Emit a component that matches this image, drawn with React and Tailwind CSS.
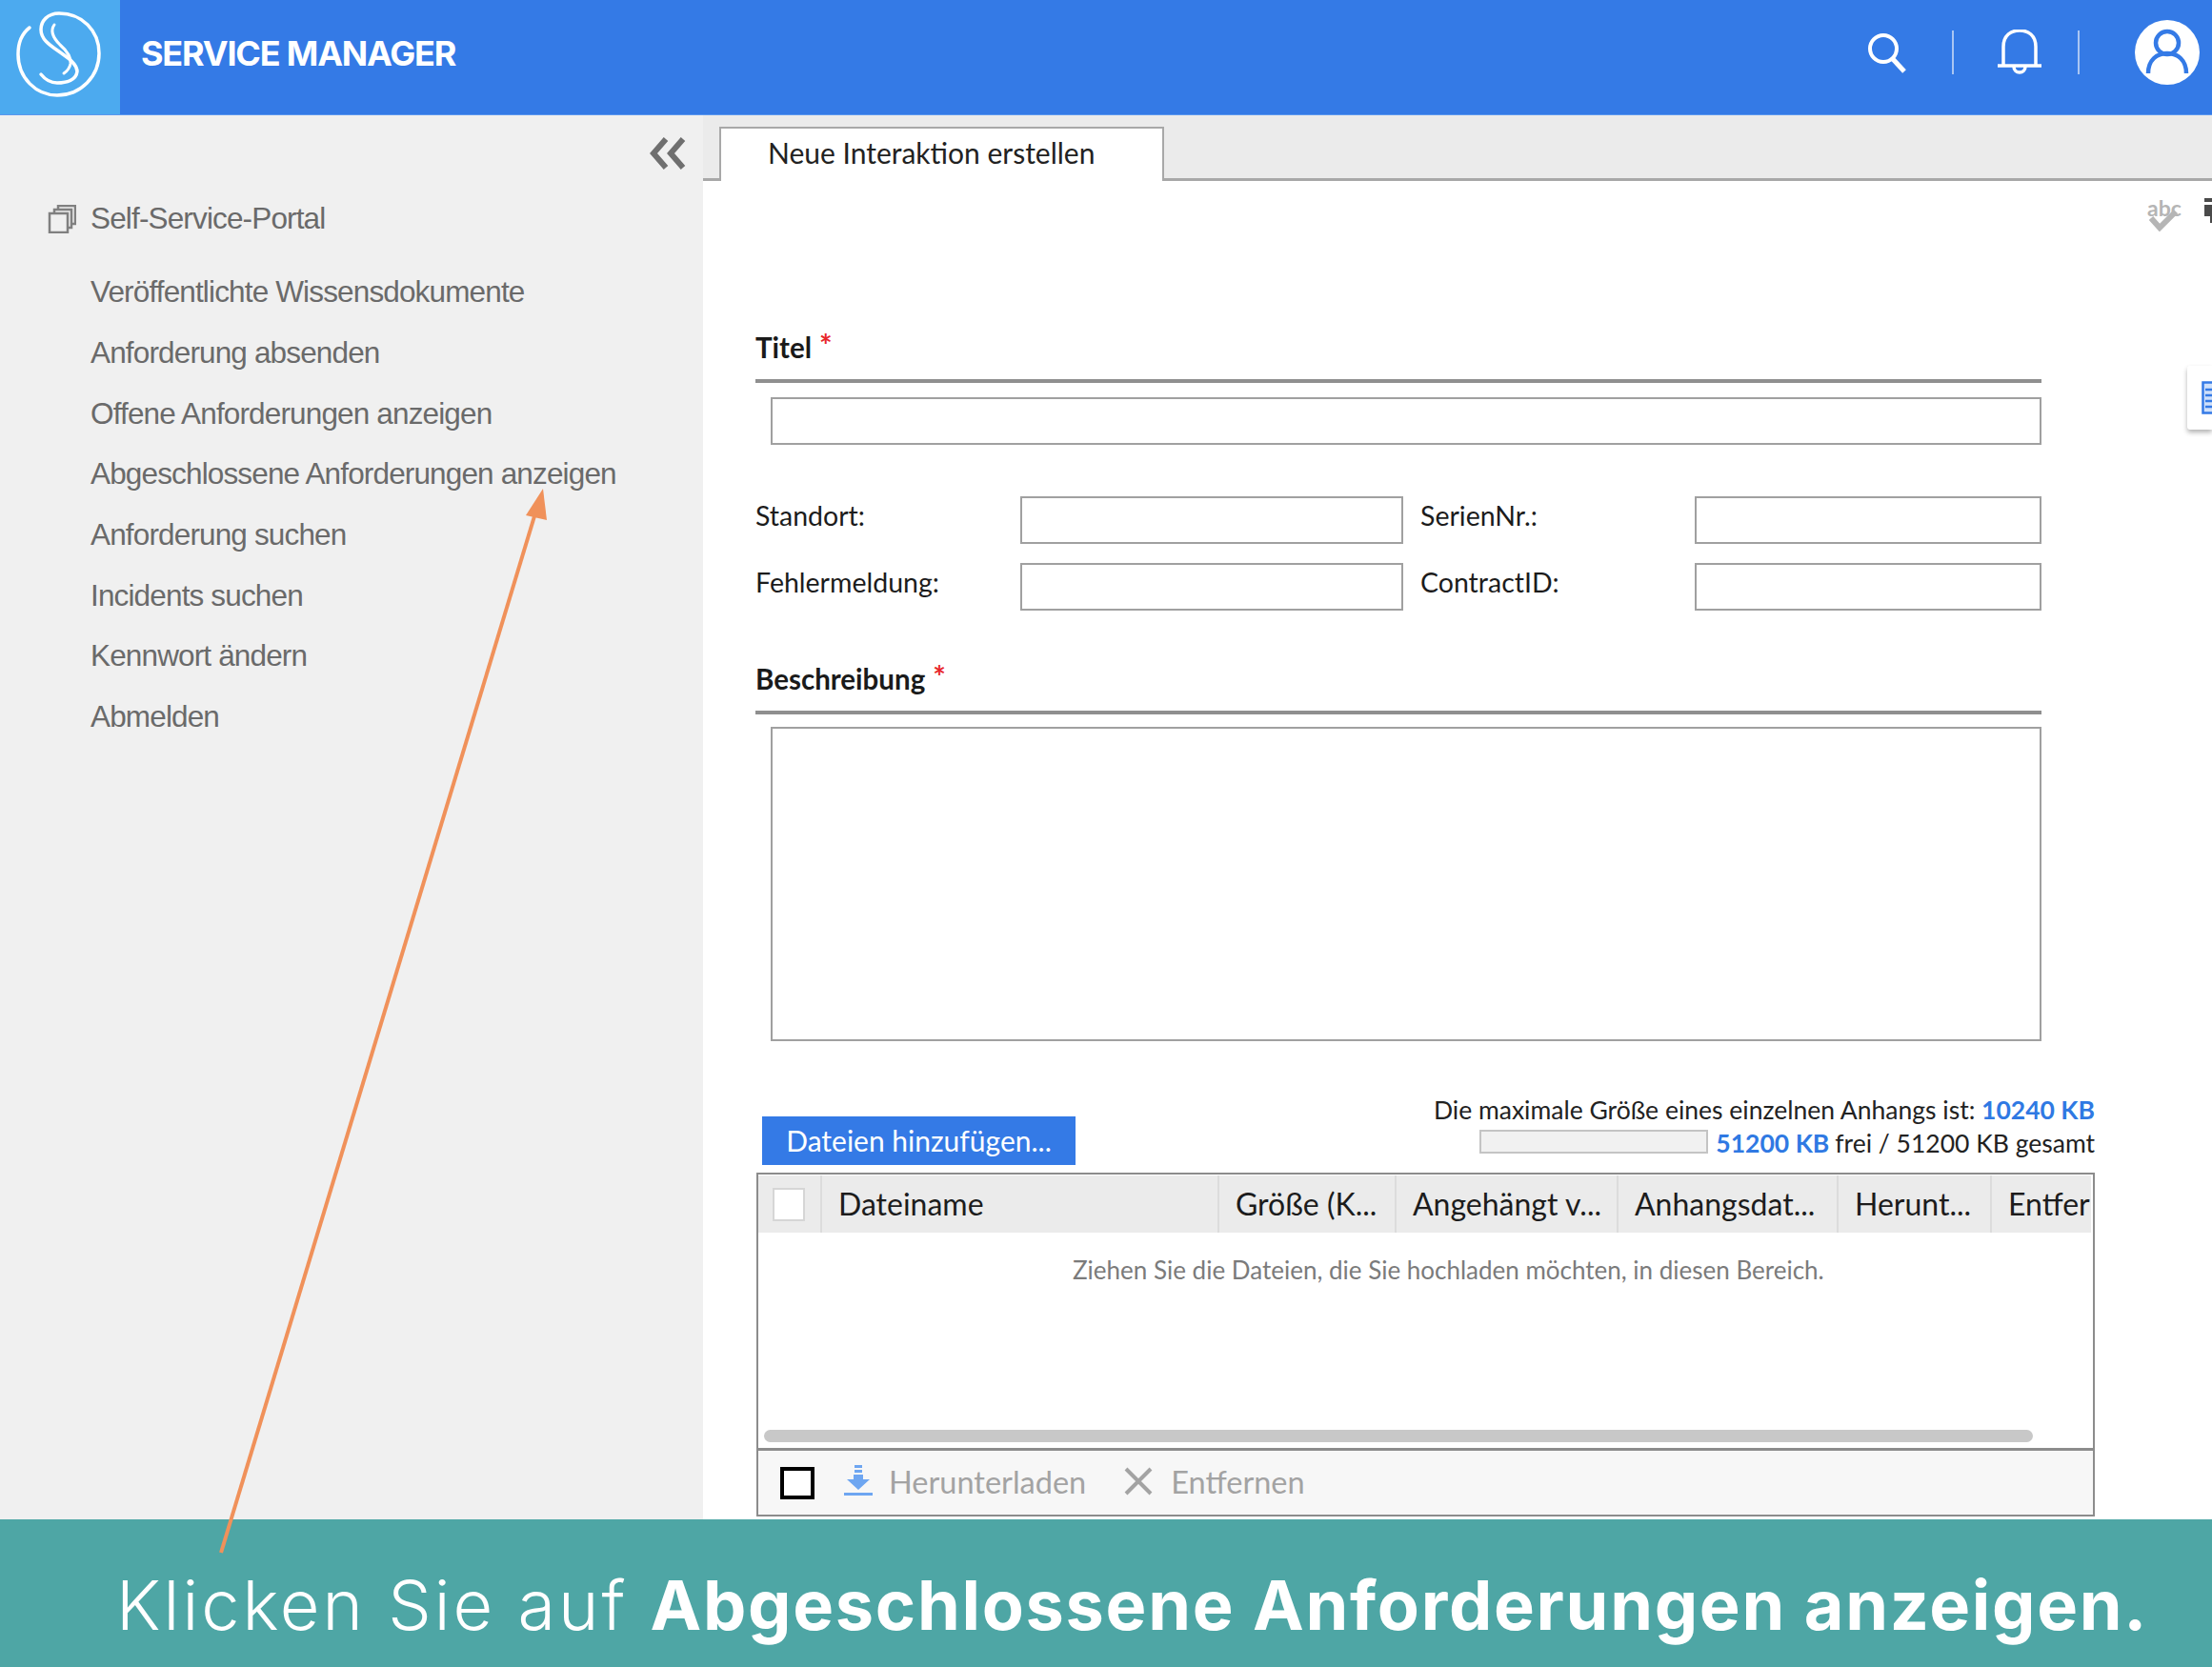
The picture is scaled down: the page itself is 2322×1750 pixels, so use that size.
const sidebarLinks = [
  "Veröffentlichte Wissensdokumente",
  "Anforderung absenden",
  "Offene Anforderungen anzeigen",
  "Abgeschlossene Anforderungen anzeigen",
  "Anforderung suchen",
  "Incidents suchen",
  "Kennwort ändern",
  "Abmelden",
];

const columns = [
  { label: "Dateiname", width: "w-[417px]" },
  { label: "Größe (K...", width: "w-[186px]" },
  { label: "Angehängt v...", width: "w-[233px]" },
  { label: "Anhangsdat...", width: "w-[231px]" },
  { label: "Herunt...", width: "w-[161px]" },
  { label: "Entfernen", width: "flex-1" },
];

function Logo() {
  return (
    <svg width="126" height="121" viewBox="0 0 126 121" fill="none" stroke="#fff" strokeLinecap="round">
      <path d="M31 29 C22 36 19 46 19 57 C19 82 38 100 60 100 C85 100 104 80 104 56 C104 32 86 14 62 14 C50 14 43 22 43 31 C43 43 55 49 66 57 C75 63 81 69 81 75 C80 84 70 87 60 87 C53 87 47 83 43 78" strokeWidth="3.5" />
      <path d="M57 26 C52 33 56 40 63 47 C71 54 75 60 74 67 C73 72 70 75 67 77" strokeWidth="3" />
    </svg>
  );
}

function Header() {
  return (
    <header className="h-[121px] shrink-0 flex items-stretch bg-[#347ae6] border-b border-[#5b97ee]">
      <div className="w-[126px] bg-[#4caaef] flex items-center justify-center">
        <Logo />
      </div>
      <div className="ml-[22px] flex items-center pb-[9px] text-white text-[36px] font-bold tracking-[-1.2px] font-['Inter',sans-serif]">
        SERVICE MANAGER
      </div>
      <div className="ml-auto flex items-center pb-[11px] text-white">
        <svg width="42" height="44" viewBox="0 0 42 44" fill="none" stroke="#fff" strokeWidth="4">
          <circle cx="17" cy="18" r="14" />
          <path d="M27 29 L39 42" strokeWidth="5" />
        </svg>
        <div className="w-[2px] h-[46px] bg-[#a9c6f3] ml-[47px]" />
        <svg className="ml-[45px]" width="48" height="48" viewBox="0 0 48 48" fill="none" stroke="#fff" strokeWidth="3.5">
          <path d="M1 38 H47" strokeWidth="3.5" />
          <path d="M7 38 V18 C7 6 15 1 24 1 C33 1 41 6 41 18 V38" />
          <path d="M18 39 C18 47 30 47 30 39" />
        </svg>
        <div className="w-[2px] h-[46px] bg-[#a9c6f3] ml-[37px]" />
        <div className="ml-[58px] mr-[13px] w-[68px] h-[68px] rounded-full bg-white flex items-center justify-center">
          <svg width="68" height="68" viewBox="0 0 68 68" fill="none" stroke="#347ae6" strokeWidth="4.5">
            <circle cx="34" cy="24" r="12" />
            <path d="M14 56 C14 42 23 35 34 35 C45 35 54 42 54 56" />
          </svg>
        </div>
      </div>
    </header>
  );
}

function Sidebar() {
  return (
    <aside className="w-[738px] shrink-0 bg-[#f0f0f0] flex flex-col font-['Liberation_Sans',sans-serif] text-[#6a6a6a] text-[31.5px] tracking-[-0.85px]">
      <div className="flex justify-end pr-[18px] pt-[23px] h-[79px]">
        <svg width="39" height="34" viewBox="0 0 39 34" fill="none" stroke="#6f6f6f" strokeWidth="6" >
          <path d="M18 2 L5 17 L18 32" />
          <path d="M36 2 L23 17 L36 32" />
        </svg>
      </div>
      <div className="flex items-center h-[60px]">
        <svg className="ml-[50px]" width="30" height="30" viewBox="0 0 30 30" fill="none" stroke="#808080" strokeWidth="2.5">
          <rect x="2" y="9" width="19" height="20" />
          <path d="M7 8 V5 H25 V24 H22" />
          <path d="M11 4 V1 H29 V20 H26" />
        </svg>
        <span className="ml-[15px]">Self-Service-Portal</span>
      </div>
      <nav className="pl-[95px] pt-[15px] flex flex-col">
        {sidebarLinks.map((link) => (
          <div key={link} className="h-[63.7px] flex items-center">
            {link}
          </div>
        ))}
      </nav>
    </aside>
  );
}

function SectionTitle({ children }) {
  return (
    <div className="ml-[55px] w-[1350px]">
      <div className="h-[40px] flex items-center font-bold text-[29.5px] text-[#1a1a1a]">
        {children}
        <span className="text-[#e8262a] text-[32px] font-bold ml-[8px] -mt-[4px]">*</span>
      </div>
      <div className="h-[4px] bg-[#8f8f8f] mt-[13px]" />
    </div>
  );
}

function TextInput({ className }) {
  return <div className={`h-[50px] border-2 border-[#a0a0a0] bg-white ${className}`} />;
}

function AttachmentTable() {
  return (
    <div className="ml-[56px] w-[1405px] h-[361px] mt-[8px] border-2 border-[#8c8c8c] flex flex-col overflow-hidden">
      <div className="h-[60px] mt-[1px] mr-[2px] bg-[#ebebeb] flex shrink-0">
        <div className="w-[67px] shrink-0 border-r-2 border-[#dcdcdc] flex items-center pl-[15px]">
          <div className="w-[34px] h-[35px] bg-white border-2 border-[#d6d6d6]" />
        </div>
        {columns.map((col) => (
          <div
            key={col.label}
            className={`${col.width} shrink-0 border-r-2 last:border-r-0 border-[#dcdcdc] pl-[17px] flex items-center text-[32px] text-[#1c1c1c] whitespace-nowrap overflow-hidden`}
          >
            {col.label}
          </div>
        ))}
      </div>
      <div className="flex-1 relative flex flex-col">
        <div className="pt-[21px] pl-[330px] text-[26px] text-[#7b7b7b] leading-[36px]">
          Ziehen Sie die Dateien, die Sie hochladen möchten, in diesen Bereich.
        </div>
        <div className="mt-auto mb-[6px] ml-[6px] w-[1332px] h-[13px] rounded-full bg-[#c8c8c8]" />
      </div>
      <div className="h-[70px] shrink-0 border-t-[3px] border-[#8c8c8c] bg-[#f7f7f7] flex items-center text-[32.5px] text-[#a3a3a3]">
        <div className="ml-[23px] w-[36px] h-[34px] border-[4px] border-black bg-white" />
        <svg className="ml-[31px] -mt-[6px]" width="30" height="32" viewBox="0 0 30 32" fill="#6ea6f1">
          <rect x="11" y="0" width="8" height="3" />
          <rect x="11" y="5" width="8" height="3" />
          <path d="M10 10 H20 V15 H27 L15 26 L3 15 H10 Z" />
          <rect x="0" y="29" width="30" height="3" />
        </svg>
        <span className="ml-[17px]">Herunterladen</span>
        <svg className="ml-[40px] -mt-[4px]" width="30" height="30" viewBox="0 0 30 30" stroke="#a3a3a3" strokeWidth="4">
          <path d="M2 2 L28 28 M28 2 L2 28" />
        </svg>
        <span className="ml-[19px]">Entfernen</span>
      </div>
    </div>
  );
}

function Main() {
  return (
    <main className="flex-1 min-w-0 bg-white relative overflow-hidden font-['Lato',sans-serif] text-[#1c1c1c]">
      <div className="h-[69px] bg-[#ebebeb] border-b-[3px] border-[#a8a8a8] flex items-end pl-[17px]">
        <div className="w-[467px] h-[57px] -mb-[3px] bg-white border-2 border-b-0 border-[#a8a8a8] flex items-center pl-[49px] pb-[4px] text-[30px] text-[#222]">
          Neue Interaktion erstellen
        </div>
      </div>

      <div className="h-[155px] flex justify-end items-start pt-[16px]">
        <div className="relative w-[33px] h-[40px] mr-[35px] text-[#b5b5b5] text-[23px] leading-[24px] font-bold">
          abc
          <svg className="absolute left-[2px] top-[13px]" width="30" height="24" viewBox="0 0 30 24" fill="none" stroke="#b5b5b5" strokeWidth="6">
            <path d="M2 10 L11 20 L28 3" />
          </svg>
        </div>
        <div className="absolute right-0 top-[263px] w-[26px] h-[67px] bg-white rounded-l-[3px] shadow-[0_3px_5px_rgba(0,0,0,0.3)] flex items-center justify-end overflow-hidden">
          <svg width="11" height="35" viewBox="0 0 11 35" fill="#cfe0fa" stroke="#347ae6" strokeWidth="2.5">
            <rect x="1.5" y="1.5" width="20" height="32" />
            <path d="M4 9 H22 M4 15 H22 M4 21 H22 M4 27 H22" />
          </svg>
        </div>
        <svg className="absolute right-0 top-[87px]" width="8" height="26" viewBox="0 0 8 26" fill="#4a4a4a">
          <rect x="0" y="0" width="8" height="4" />
          <rect x="0" y="7" width="8" height="12" />
          <rect x="6" y="19" width="2" height="7" />
        </svg>
      </div>

      <SectionTitle>Titel</SectionTitle>
      <TextInput className="ml-[71px] w-[1334px] mt-[15px]" />

      <div className="ml-[55px] w-[1350px] mt-[54px] grid grid-cols-[278px_402px_306px_364px] grid-rows-[50px_50px] gap-y-[20px] text-[28.5px]">
        <div className="pb-[10px] flex items-center">Standort:</div>
        <TextInput className="w-[402px]" />
        <div className="pl-[18px] pb-[10px] flex items-center">SerienNr.:</div>
        <TextInput className="w-[364px]" />
        <div className="pb-[10px] flex items-center">Fehlermeldung:</div>
        <TextInput className="w-[402px]" />
        <div className="pl-[18px] pb-[10px] flex items-center">ContractID:</div>
        <TextInput className="w-[364px]" />
      </div>

      <div className="mt-[52px]">
        <SectionTitle>Beschreibung</SectionTitle>
      </div>
      <TextInput className="ml-[71px] w-[1334px] !h-[330px] mt-[13px]" />

      <div className="ml-[62px] w-[1399px] mt-[55px] h-[75px] flex justify-between items-end">
        <div className="w-[329px] h-[51px] bg-[#347ae6] text-white text-[30px] flex items-center justify-center">
          Dateien hinzufügen...
        </div>
        <div className="flex flex-col items-end text-[26.5px] leading-[35px] text-[#222] self-start">
          <div>
            Die maximale Größe eines einzelnen Anhangs ist:{" "}
            <span className="text-[#2f79e3] font-bold">10240 KB</span>
          </div>
          <div className="flex items-center">
            <div className="w-[240px] h-[25px] -mt-[4px] bg-[#f1f1f1] border-2 border-[#c4c4c4] mr-[8px]" />
            <span className="text-[#2f79e3] font-bold mr-[6px]">51200 KB</span>
            frei / 51200 KB gesamt
          </div>
        </div>
      </div>

      <AttachmentTable />
    </main>
  );
}

export default function App() {
  return (
    <div className="relative w-[2322px] h-[1750px] overflow-hidden flex flex-col bg-white">
      <Header />
      <div className="flex h-[1474px] shrink-0 overflow-hidden">
        <Sidebar />
        <Main />
      </div>
      <div className="flex-1 bg-[#4ea6a5] text-white pl-[122px] pt-[45px] text-[72px] leading-[90px] tracking-[3px] whitespace-nowrap font-['Inter',sans-serif] font-light">
        Klicken Sie auf <span className="font-bold tracking-[1.7px]">Abgeschlossene Anforderungen anzeigen.</span>
      </div>
      <svg className="absolute left-0 top-0 pointer-events-none" width="2322" height="1750" fill="none">
        <path d="M232 1630 L564 532" stroke="#f0915a" strokeWidth="4" />
        <path d="M570 513 L552 541 L574 546 Z" fill="#f0915a" />
      </svg>
    </div>
  );
}
